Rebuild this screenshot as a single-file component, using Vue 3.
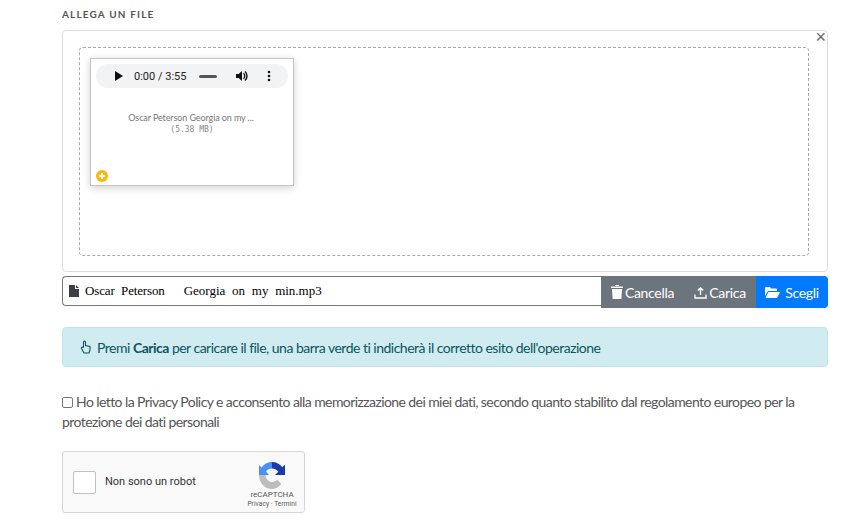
<script setup>
const title = 'ALLEGA UN FILE'
</script>

<template>
  <div class="page">
    <div class="heading">{{ title }}</div>
    <div class="preview">
      <span class="close">×</span>
      <div class="drop">
        <div class="thumb">
          <div class="player">
            <svg class="play" width="10" height="12" viewBox="0 0 10 12"><path d="M1 1v10l8-5z" fill="#111"/></svg>
            <span class="time">0:00 / 3:55</span>
            <span class="seek"></span>
            <svg class="vol" width="14" height="14" viewBox="0 0 14 14"><path d="M1 5v4h2.600l3.400 3V2L3.600 5z" fill="#111"/><path d="M8.500 4.300a3.500 3.500 0 0 1 0 5.400M10 2.500a6 6 0 0 1 0 9" fill="none" stroke="#111" stroke-width="1.400"/></svg>
            <svg class="more" width="4" height="12" viewBox="0 0 4 12"><circle cx="2" cy="2" r="1.300" fill="#111"/><circle cx="2" cy="6" r="1.300" fill="#111"/><circle cx="2" cy="10" r="1.300" fill="#111"/></svg>
          </div>
          <div class="fname">Oscar Peterson Georgia on my ...</div>
          <div class="fsize">(5.38 MB)</div>
          <svg class="plus" width="12" height="12" viewBox="0 0 12 12"><circle cx="6" cy="6" r="6" fill="#f8b90c"/><path d="M6 3v6M3 6h6" stroke="#fff" stroke-width="2"/></svg>
        </div>
      </div>
    </div>

    <div class="inputgroup">
      <div class="caption">
        <svg width="10" height="12" viewBox="0 0 10 12"><path d="M0 0h6v4h4v8H0zM7 0l3 3H7z" fill="#3a3f45"/></svg>
        <span class="cap1">Oscar Peterson</span>
        <span class="cap2">Georgia on my min.mp3</span>
      </div>
      <div class="btn grey first">
        <svg width="12" height="14" viewBox="0 0 12 14"><path d="M0 1.500h12V3H0zM4 0h4v1H4zM1 4h10l-.6 10H1.600z" fill="#fff"/></svg>
        <span>Cancella</span>
      </div>
      <div class="btn grey second">
        <svg width="13" height="13" viewBox="0 0 13 13"><path d="M6.500 9V2M3.800 4.500 6.500 1.800l2.700 2.700M1 8.500V12h11V8.500" fill="none" stroke="#fff" stroke-width="1.300"/></svg>
        <span>Carica</span>
      </div>
      <div class="btn blue">
        <svg width="15" height="12" viewBox="0 0 15 12"><path d="M0 2a1 1 0 0 1 1-1h4l1 1.500h5a1 1 0 0 1 1 1V5H3L0 10z" fill="#fff"/><path d="M3.500 6H15l-3 6H.5z" fill="#fff"/></svg>
        <span>Scegli</span>
      </div>
    </div>

    <div class="alert">
      <svg width="12" height="14" viewBox="0 0 12 14"><path d="M3.500 7V2a1 1 0 0 1 2 0v3.500l4.500 1V10l-1 3H4L1.500 8.500c-.6-1 .8-2 1.500-1z" fill="none" stroke="#0c5460" stroke-width="1.100"/></svg>
      <span>Premi <b>Carica</b> per caricare il file, una barra verde ti indicherà il corretto esito dell'operazione</span>
    </div>

    <label class="consent">
      <span class="box"></span>Ho letto la Privacy Policy e acconsento alla memorizzazione dei miei dati, secondo quanto stabilito dal regolamento europeo per la protezione dei dati personali
    </label>

    <div class="captcha">
      <span class="cbox"></span>
      <span class="robot">Non sono un robot</span>
      <div class="brand">
        <svg width="26" height="27" viewBox="0 0 26 27">
          <path d="M13 0C8.500 0 4.800 2.300 2.600 5.600L0 3v10h10L7 9.600C8.200 7.600 10.400 6.500 13 6.500z" fill="#4a90f2"/>
          <path d="M13 0c4.300 0 8 2 10.200 5.300L26 2.500V13H16l3.300-3.300C18 7.800 15.800 6.500 13 6.500z" fill="#1c3aa9"/>
          <path d="M0 13h6.500c.3 4 3 7 6.500 7 2.200 0 4-.8 5.300-2.400l4 4.400C19.800 25 16.600 27 13 27 5.800 27 0 20.800 0 13z" fill="#bdbdbd"/>
        </svg>
        <div class="rc">reCAPTCHA</div>
        <div class="terms">Privacy · Termini</div>
      </div>
    </div>
  </div>
</template>

<style scoped>
.page {
  width: 766px;
  height: 523px;
  box-sizing: border-box;
  margin-left: 62px;
  padding-top: 8px;
  font-family: Lato, sans-serif;
  color: #555;
  overflow: hidden;
}
.heading {
  font-size: 10px;
  line-height: 12px;
  font-weight: 700;
  letter-spacing: 1.15px;
  color: #555;
}
.preview {
  position: relative;
  margin-top: 10px;
  height: 242px;
  box-sizing: border-box;
  border: 1px solid #ddd;
  border-radius: 4px;
  padding: 16px 18px 15px 16px;
}
.close {
  position: absolute;
  top: -2px;
  right: 1px;
  font-family: "Liberation Sans", sans-serif;
  font-size: 18px;
  line-height: 16px;
  color: #666;
}
.drop {
  height: 100%;
  box-sizing: border-box;
  border: 1px dashed #aaa;
  border-radius: 4px;
  padding: 10px;
}
.thumb {
  position: relative;
  width: 204px;
  height: 128px;
  box-sizing: border-box;
  border: 1px solid #c4c4c4;
  box-shadow: 0 2px 8px rgba(0, 0, 0, 0.18);
  background: #fff;
  padding: 5px;
  text-align: center;
}
.player {
  display: flex;
  align-items: center;
  height: 24px;
  border-radius: 12px;
  background: #f1f3f4;
  padding-left: 18px;
  font-family: Roboto, sans-serif;
  font-size: 11px;
  color: #222;
}
.play { margin-right: 10px; }
.time { width: 64px; text-align: left; }
.seek { width: 18px; height: 3px; border-radius: 2px; background: #555; margin-left: 1px; }
.vol { margin-left: 18px; }
.more { margin-left: 18px; }
.fname {
  margin-top: 24px;
  font-size: 9px;
  line-height: 12px;
  color: #777;
  letter-spacing: -0.1px;
  margin-left: -2px;
}
.fsize {
  font-family: "DejaVu Sans Mono", monospace;
  font-size: 8px;
  line-height: 12px;
  color: #888;
}
.plus { position: absolute; left: 5px; bottom: 3px; }
.inputgroup {
  display: flex;
  margin-top: 4px;
  height: 32px;
}
.caption {
  flex: 1;
  display: flex;
  align-items: center;
  box-sizing: border-box;
  height: 30px;
  border: 1px solid #777;
  border-right: 0;
  border-radius: 4px 0 0 4px;
  padding-left: 6px;
  font-family: "Liberation Serif", serif;
  font-size: 13px;
  color: #000;
}
.cap1 { margin-left: 6px; word-spacing: 3.400px; letter-spacing: -0.15px; }
.cap2 { margin-left: 19px; word-spacing: 3.500px; }
.btn {
  display: flex;
  align-items: center;
  justify-content: center;
  gap: 2px;
  box-sizing: border-box;
  height: 32px;
  font-size: 14px;
  letter-spacing: -0.3px;
  color: #fff;
}
.grey { background: #6c757d; }
.first { width: 83px; }
.second { width: 72px; }
.blue { width: 72px; background: #007bff; border-radius: 0 4px 4px 0; gap: 5px; }
.alert {
  display: flex;
  align-items: center;
  gap: 5px;
  margin-top: 19px;
  height: 40px;
  box-sizing: border-box;
  background: #d1ecf1;
  border: 1px solid #bee5eb;
  border-radius: 4px;
  padding-left: 17px;
  font-size: 14px;
  letter-spacing: -0.51px;
  color: #0c5460;
}
.alert b { font-weight: 700; }
.consent {
  display: block;
  margin-top: 25px;
  font-size: 14px;
  line-height: 20px;
  letter-spacing: -0.58px;
  color: #555;
}
.box {
  display: inline-block;
  width: 9px;
  height: 9px;
  border: 1px solid #767676;
  border-radius: 2px;
  margin-right: 3px;
  vertical-align: -1px;
}
.captcha {
  display: flex;
  align-items: center;
  margin-top: 19px;
  width: 243px;
  height: 62px;
  box-sizing: border-box;
  border: 1px solid #d6d6d6;
  border-radius: 3px;
  background: #f9f9f9;
  padding-left: 10px;
  font-family: Roboto, sans-serif;
  position: relative;
}
.cbox {
  width: 21px;
  height: 21px;
  border: 1px solid #c1c1c1;
  border-radius: 2px;
  background: #fff;
}
.robot { margin-left: 9px; font-size: 11px; color: #333; margin-top: -2px; }
.brand {
  display: flex;
  flex-direction: column;
  align-items: center;
  margin-left: auto;
  width: 60px;
  margin-right: 2px;
  padding-top: 6px;
}
.rc { font-size: 8px; line-height: 11px; color: #555; }
.terms { font-size: 6.500px; line-height: 9px; color: #555; letter-spacing: 0.1px; }
</style>
